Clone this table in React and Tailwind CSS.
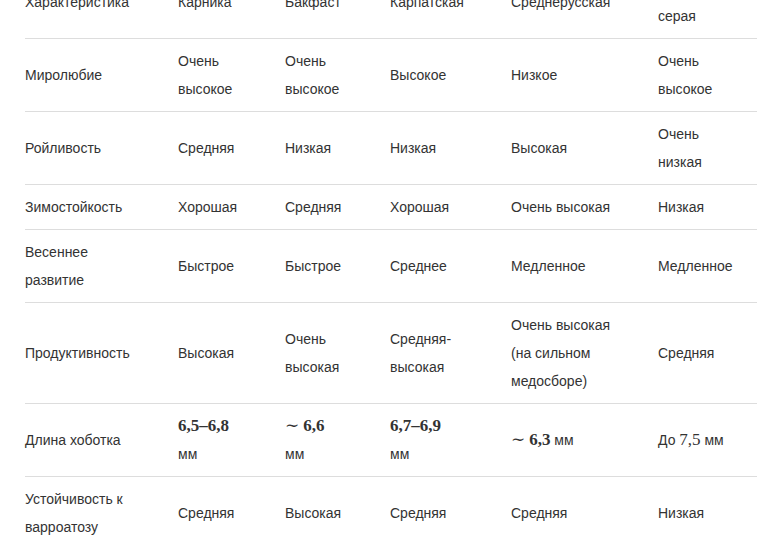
import React from "react";

const M = ({ children, bold = true }) => (
  <span
    className={`text-[17px] ${bold ? "font-bold" : "font-normal"}`}
    style={{ fontFamily: '"Liberation Serif", "DejaVu Serif", serif' }}
  >
    {children}
  </span>
);

const header = ["Характеристика", "Карника", "Бакфаст", "Карпатская", "Среднерусская", "Кавказская серая"];

const rows = [
  ["Миролюбие", "Очень высокое", "Очень высокое", "Высокое", "Низкое", "Очень высокое"],
  ["Ройливость", "Средняя", "Низкая", "Низкая", "Высокая", "Очень низкая"],
  ["Зимостойкость", "Хорошая", "Средняя", "Хорошая", "Очень высокая", "Низкая"],
  ["Весеннее развитие", "Быстрое", "Быстрое", "Среднее", "Медленное", "Медленное"],
  ["Продуктивность", "Высокая", "Очень высокая", "Средняя-высокая", "Очень высокая (на сильном медосборе)", "Средняя"],
  [
    "Длина хоботка",
    <><M>6,5–6,8</M><br />мм</>,
    <><M bold={false}>∼</M> <M>6,6</M><br />мм</>,
    <><M>6,7–6,9</M><br />мм</>,
    <><M bold={false}>∼</M> <M>6,3</M> мм</>,
    <>До <M bold={false}>7,5</M> мм</>,
  ],
  ["Устойчивость к варроатозу", "Средняя", "Высокая", "Средняя", "Средняя", "Низкая"],
];

const widths = ["w-[153px] pr-[34px]", "w-[107px] pr-4", "w-[105px] pr-4", "w-[121px] pr-4", "w-[147px] pr-[30px]", "w-[99px] pr-4"];

export default function App() {
  return (
    <div
      className="min-h-screen bg-white pl-[25px] text-[14px] leading-[28px] text-[#333]"
      style={{ fontFamily: '"Liberation Sans", Arial, sans-serif' }}
    >
      <table className="-mt-[34px] w-[732px] table-fixed border-collapse">
        <thead>
          <tr className="border-b border-[#ddd]">
            {header.map((h, i) => (
              <th key={i} className={`${widths[i]} py-2 text-left align-middle font-normal`}>
                {h}
              </th>
            ))}
          </tr>
        </thead>
        <tbody>
          {rows.map((r, ri) => (
            <tr key={ri} className="border-b border-[#ddd]">
              {r.map((c, ci) => (
                <td key={ci} className={`${widths[ci]} py-2 align-middle`}>
                  {c}
                </td>
              ))}
            </tr>
          ))}
        </tbody>
      </table>
    </div>
  );
}
